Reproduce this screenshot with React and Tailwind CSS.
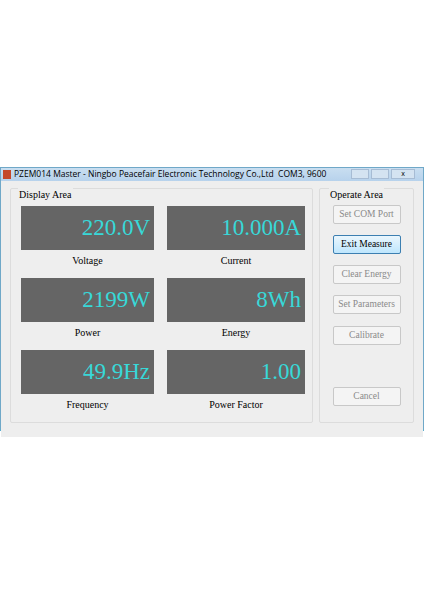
export default function App() {
  const serif = { fontFamily: '"Liberation Serif", serif' };
  const cells = [
    ["220.0V", "Voltage"], ["10.000A", "Current"],
    ["2199W", "Power"], ["8Wh", "Energy"],
    ["49.9Hz", "Frequency"], ["1.00", "Power Factor"],
  ];
  const btns = [["Set COM Port", false, "mt-0"], ["Exit Measure", true, "mt-[11px]"], ["Clear Energy", false, "mt-[11px]"], ["Set Parameters", false, "mt-[11px]"], ["Calibrate", false, "mt-[12px]"], ["Cancel", false, "mt-[42px]"]];
  return (
    <div className="w-[424px] h-[600px] bg-white flex flex-col">
      <div className="h-[167px]" />
      <div className="h-[264px] flex flex-col border border-[#6fa8c8] border-b-[3px] border-b-[#5ab0cf]">
        <div className="h-[15px] bg-gradient-to-b from-[#c9def0] to-[#b7d2ec] flex items-center px-[2px] text-[8.5px] text-black" style={{ fontFamily: '"Open Sans", sans-serif' }}>
          <div className="w-[8px] h-[9px] bg-[#c4482a] mr-[3px]" />
          <span className="flex-1 whitespace-nowrap">PZEM014 Master - Ningbo Peacefair Electronic Technology Co.,Ltd&nbsp; COM3, 9600</span>
          <div className="flex gap-[2px] mr-[6px]">
            <div className="w-[18px] h-[10px] bg-[#d4e3f1] border border-[#a7bcd4]" />
            <div className="w-[18px] h-[10px] bg-[#d4e3f1] border border-[#a7bcd4]" />
            <div className="w-[24px] h-[10px] bg-[#d4e3f1] border border-[#a7bcd4] text-[7px] leading-[8px] text-center">x</div>
          </div>
        </div>
        <div className="flex-1 bg-[#eeeeee] flex px-[9px] pt-[7px] pb-[14px] gap-[6px]" style={serif}>
          <div className="w-[303px] border border-[#dcdcdc] rounded-[2px] relative px-[10px] pt-[17px]">
            <span className="absolute left-[7px] -top-[2px] text-[10px] bg-[#eeeeee] px-[1px]">Display Area</span>
            <div className="grid grid-cols-[133px_138px] gap-x-[13px]">
              {cells.map(([v, l], i) => (
                <div key={i} className="flex flex-col items-center h-[72px]">
                  <div className="w-full h-[44px] bg-[#656565] flex items-center justify-end pr-[4px] text-[23px] text-[#38d8d8]">{v}</div>
                  <div className="text-[10px] mt-[3px] text-black">{l}</div>
                </div>
              ))}
            </div>
          </div>
          <div className="w-[95px] border border-[#dcdcdc] rounded-[2px] relative flex flex-col items-center pt-[16px]">
            <span className="absolute left-[9px] -top-[2px] text-[10px] bg-[#eeeeee] px-[1px]">Operate Area</span>
            {btns.map(([t, a, m]) => (
              <div key={t} className={`${m} w-[68px] h-[19px] flex items-center justify-center text-[9.5px] rounded-[2px] ${a ? "border border-[#3c7fb1] bg-gradient-to-b from-[#eaf6fd] to-[#bee6fd] text-black" : "border border-[#c8c8c8] bg-[#f4f4f4] text-[#8a8a8a]"}`}>{t}</div>
            ))}
          </div>
        </div>
      </div>
    </div>
  );
}
